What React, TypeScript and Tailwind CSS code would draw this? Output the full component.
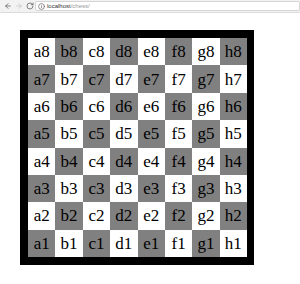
import { ArrowLeft, ArrowRight, RotateCw, Info } from "lucide-react";

const FILES = ["a", "b", "c", "d", "e", "f", "g", "h"];
const RANKS = [8, 7, 6, 5, 4, 3, 2, 1];

function BrowserBar(): JSX.Element {
  return (
    <div className="flex items-center h-[13px] bg-[#f2f2f2] border-b border-[#dcdcdc]">
      <div className="flex items-center gap-[3px] pl-[4px] w-[35px] text-[#5a5a5a]">
        <ArrowLeft size={8} strokeWidth={2.2} />
        <ArrowRight size={8} strokeWidth={2.2} className="text-[#c4c4c4]" />
        <RotateCw size={8} strokeWidth={2.2} />
      </div>
      <div className="flex-1 flex items-center gap-[2px] h-[10px] bg-white border border-[#d6d6d6] rounded-[2px] pl-[2px]">
        <Info size={7} strokeWidth={2.2} className="text-[#5a5a5a]" />
        <span className="text-[6px] leading-none font-['Liberation_Sans',sans-serif] text-[#333]">
          localhost<span className="text-[#999]">/chess/</span>
        </span>
      </div>
    </div>
  );
}

function Board(): JSX.Element {
  return (
    <div className="border-black border-l-8 border-t-8 border-b-8 border-r-[7px]">
      <div className="grid grid-cols-8 grid-rows-8 w-[219px] h-[219px]">
        {RANKS.map((rank) =>
          FILES.map((file, i) => {
            const light = (i + rank) % 2 === 0;
            return (
              <div
                key={file + rank}
                className={`flex items-center justify-center text-[17px] leading-none text-black font-['Liberation_Serif',serif] ${
                  light ? "bg-white" : "bg-[#808080]"
                }`}
              >
                {file}
                {rank}
              </div>
            );
          })
        )}
      </div>
    </div>
  );
}

export default function App(): JSX.Element {
  return (
    <div className="w-[300px] h-[284px] bg-white overflow-hidden">
      <BrowserBar />
      <div className="flex pl-[20px] pt-[17px]">
        <Board />
      </div>
    </div>
  );
}
